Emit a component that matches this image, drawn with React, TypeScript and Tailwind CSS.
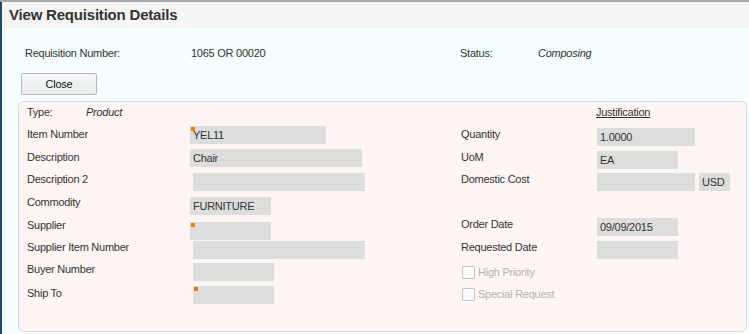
import type { ReactNode } from 'react'

function Box({ className = '', value, marker }: { className?: string; value?: string; marker?: boolean }) {
  return (
    <div className={`relative h-[18px] shrink-0 bg-[#dddddd] pl-[3px] leading-[18px] text-[#333] ${className}`}>
      {marker && <span className="absolute left-px top-px h-[4px] w-[4px] bg-[#f47b00]" />}
      {value}
    </div>
  )
}

function Label({ className = '', children }: { className?: string; children: ReactNode }) {
  return <div className={`shrink-0 leading-[14px] text-[#333] ${className}`}>{children}</div>
}

function Check({ label, className = '' }: { label: string; className?: string }) {
  return (
    <div className={`ml-px flex items-center gap-[3px] ${className}`}>
      <span className="h-[13px] w-[13px] rounded-[1px] border border-[#c6c6c6] bg-[#fafafa]" />
      <span className="leading-[14px] text-[#b2b2b2]">{label}</span>
    </div>
  )
}

export default function App() {
  return (
    <div className="flex h-[334px] w-[749px] overflow-hidden border-t-2 border-[#a9a9b1] bg-[#f5ffff] font-['Liberation_Sans',Arial,sans-serif] text-[11px] tracking-[-0.25px]">
      <div className="w-[2px] shrink-0 bg-[#1c4b6c]" />
      <div className="flex flex-1 flex-col">
        {/* Header */}
        <div className="flex h-[26px] items-center bg-[#f5f5f5] pl-[7px]">
          <h1 className="text-[15px] font-bold tracking-[-0.2px] text-[#333]">View Requisition Details</h1>
        </div>

        <div className="pl-[16px]">
          {/* Requisition summary */}
          <div className="mt-[18px] flex pl-[7px] leading-[14px] text-[#333]">
            <div className="w-[166px]">Requisition Number:</div>
            <div className="w-[269px]">1065 OR 00020</div>
            <div className="w-[78px]">Status:</div>
            <div className="italic">Composing</div>
          </div>

          <button className="ml-[3px] mt-[13px] h-[22px] w-[76px] rounded-[2px] border border-[#b8b8b8] bg-gradient-to-b from-[#f7f7f7] to-[#e9ebeb] text-[11px] text-[#111]">
            Close
          </button>

          {/* Details panel */}
          <div className="mt-[6px] h-[231px] w-[729px] rounded-[6px] border border-[#d6dbe3] bg-[#fff5f5] pl-[8px] pt-[3px]">
            <div className="flex h-[18px] leading-[14px] text-[#333]">
              <div className="flex w-[434px]">
                <div className="w-[59px]">Type:</div>
                <div className="italic">Product</div>
              </div>
              <div className="ml-[135px] underline">Justification</div>
            </div>

            <div className="flex h-[23px]">
              <div className="flex w-[434px]">
                <Label className="mt-[4px] w-[163px]">Item Number</Label>
                <Box className="mt-[3px] w-[136px]" value="YEL11" marker />
              </div>
              <Label className="mt-[4px] w-[136px]">Quantity</Label>
              <Box className="mt-[5px] w-[98px]" value="1.0000" />
            </div>

            <div className="flex h-[23px]">
              <div className="flex w-[434px]">
                <Label className="mt-[4px] w-[163px]">Description</Label>
                <Box className="mt-[3px] w-[172px]" value="Chair" />
              </div>
              <Label className="mt-[4px] w-[136px]">UoM</Label>
              <Box className="mt-[5px] w-[81px]" value="EA" />
            </div>

            <div className="flex h-[23px]">
              <div className="flex w-[434px]">
                <Label className="mt-[3px] w-[166px]">Description 2</Label>
                <Box className="mt-[4px] w-[172px]" />
              </div>
              <Label className="mt-[3px] w-[136px]">Domestic Cost</Label>
              <Box className="mt-[4px] w-[98px]" />
              <Box className="ml-[4px] mt-[4px] w-[31px]" value="USD" />
            </div>

            <div className="flex h-[23px]">
              <div className="flex w-[434px]">
                <Label className="mt-[3px] w-[163px]">Commodity</Label>
                <Box className="mt-[5px] w-[81px]" value="FURNITURE" />
              </div>
            </div>

            <div className="flex h-[23px]">
              <div className="flex w-[434px]">
                <Label className="mt-[3px] w-[163px]">Supplier</Label>
                <Box className="mt-[7px] w-[81px]" marker />
              </div>
              <Label className="mt-[2px] w-[136px]">Order Date</Label>
              <Box className="mt-[3px] w-[81px]" value="09/09/2015" />
            </div>

            <div className="flex h-[23px]">
              <div className="flex w-[434px]">
                <Label className="mt-[2px] w-[166px]">Supplier Item Number</Label>
                <Box className="mt-[3px] w-[172px]" />
              </div>
              <Label className="mt-[2px] w-[136px]">Requested Date</Label>
              <Box className="mt-[3px] w-[81px]" />
            </div>

            <div className="flex h-[23px]">
              <div className="flex w-[434px]">
                <Label className="mt-[1px] w-[166px]">Buyer Number</Label>
                <Box className="mt-[2px] w-[81px]" />
              </div>
              <Check className="mt-[4px] self-start" label="High Priority" />
            </div>

            <div className="flex h-[23px]">
              <div className="flex w-[434px]">
                <Label className="mt-[2px] w-[166px]">Ship To</Label>
                <Box className="mt-[2px] w-[81px]" marker />
              </div>
              <Check className="mt-[3px] self-start" label="Special Request" />
            </div>
          </div>
        </div>
      </div>
    </div>
  )
}
